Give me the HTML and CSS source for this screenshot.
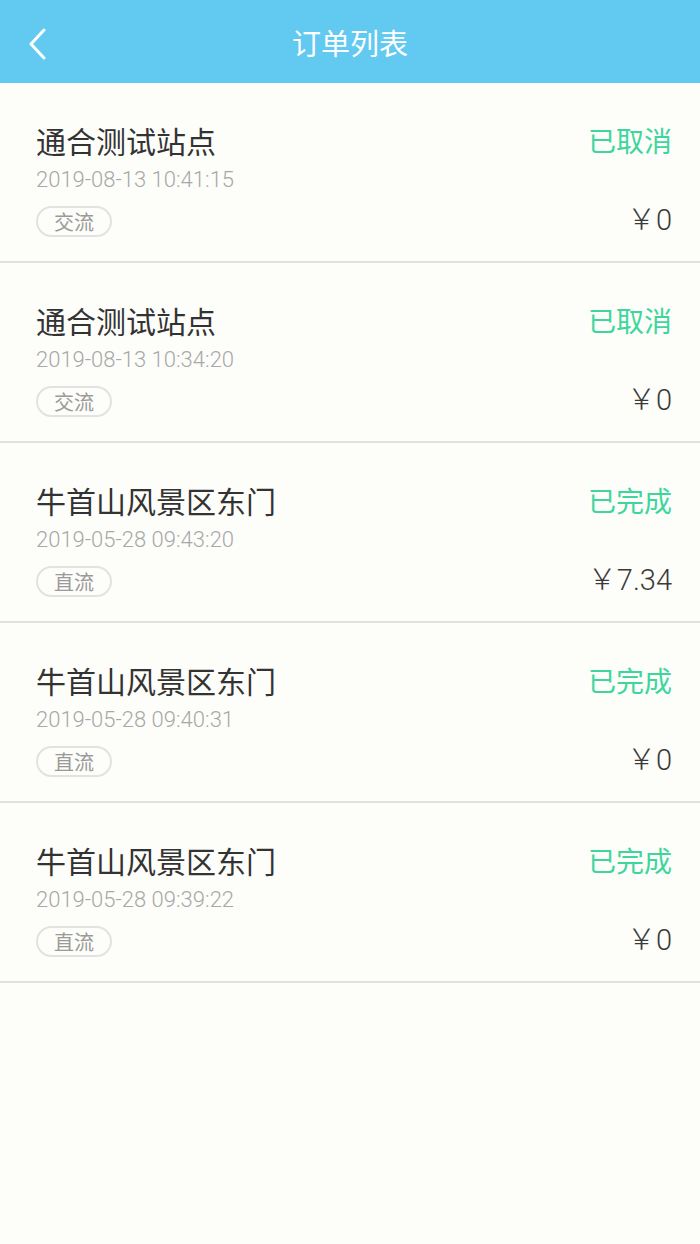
FILE: index.html
```html
<!DOCTYPE html>
<html>
<head>
    <meta charset="UTF-8">
    <title>订单列表</title>
    <link rel="stylesheet" href="styles.css">
</head>
<body>
    <header class="topbar">
        <a class="back" href="#">
            <svg width="20" height="32" viewBox="0 0 20 32">
                <polyline points="16,2 3,16 16,30" fill="none" stroke="#fff" stroke-width="3" stroke-linecap="round" stroke-linejoin="round"/>
            </svg>
        </a>
        <h1>订单列表</h1>
    </header>

    <div class="order-list">
        <div class="order">
            <div class="info">
                <h2 class="station">通合测试站点</h2>
                <p class="time">2019-08-13 10:41:15</p>
                <span class="tag">交流</span>
            </div>
            <div class="side">
                <span class="status">已取消</span>
                <span class="price">￥0</span>
            </div>
        </div>
        <div class="order">
            <div class="info">
                <h2 class="station">通合测试站点</h2>
                <p class="time">2019-08-13 10:34:20</p>
                <span class="tag">交流</span>
            </div>
            <div class="side">
                <span class="status">已取消</span>
                <span class="price">￥0</span>
            </div>
        </div>
        <div class="order">
            <div class="info">
                <h2 class="station">牛首山风景区东门</h2>
                <p class="time">2019-05-28 09:43:20</p>
                <span class="tag">直流</span>
            </div>
            <div class="side">
                <span class="status">已完成</span>
                <span class="price">￥7.34</span>
            </div>
        </div>
        <div class="order">
            <div class="info">
                <h2 class="station">牛首山风景区东门</h2>
                <p class="time">2019-05-28 09:40:31</p>
                <span class="tag">直流</span>
            </div>
            <div class="side">
                <span class="status">已完成</span>
                <span class="price">￥0</span>
            </div>
        </div>
        <div class="order">
            <div class="info">
                <h2 class="station">牛首山风景区东门</h2>
                <p class="time">2019-05-28 09:39:22</p>
                <span class="tag">直流</span>
            </div>
            <div class="side">
                <span class="status">已完成</span>
                <span class="price">￥0</span>
            </div>
        </div>
    </div>
</body>
</html>
```

FILE: styles.css
```css
body {
    margin: 0;
    background-color: #fdfdfa;
    font-family: "Noto Sans CJK SC", "Noto Sans", sans-serif;
}

.topbar {
    display: flex;
    align-items: center;
    justify-content: center;
    position: relative;
    height: 83px;
    background-color: #62c9f1;
}

.topbar h1 {
    margin: 0;
    font-size: 29px;
    font-weight: normal;
    color: #fff;
}

.back {
    position: absolute;
    left: 28px;
    top: 28px;
    display: block;
    line-height: 0;
}

.order {
    display: flex;
    justify-content: space-between;
    height: 139px;
    padding: 39px 28px 0 36px;
    border-bottom: 2px solid #e0e0dc;
}

.order .info {
    display: flex;
    flex-direction: column;
    align-items: flex-start;
}

.station {
    margin: 0;
    font-size: 30px;
    line-height: 36px;
    font-weight: normal;
    color: #333;
}

.time {
    margin: 9px 0 0;
    font-family: Roboto, "Noto Sans CJK SC", sans-serif;
    font-size: 22px;
    font-weight: 300;
    line-height: 26px;
    color: #a8a8a8;
}

.tag {
    margin-top: 13px;
    height: 27px;
    line-height: 27px;
    padding: 0 16px;
    border: 2px solid #e2e2e0;
    border-radius: 16px;
    font-size: 20px;
    color: #999;
}

.side {
    display: flex;
    flex-direction: column;
    align-items: flex-end;
}

.status {
    font-size: 28px;
    line-height: 36px;
    color: #3fd69d;
}

.price {
    margin-top: 44px;
    font-family: Roboto, "Noto Sans CJK SC", sans-serif;
    font-size: 29px;
    font-weight: 300;
    line-height: 36px;
    color: #3a3a3a;
}
```
